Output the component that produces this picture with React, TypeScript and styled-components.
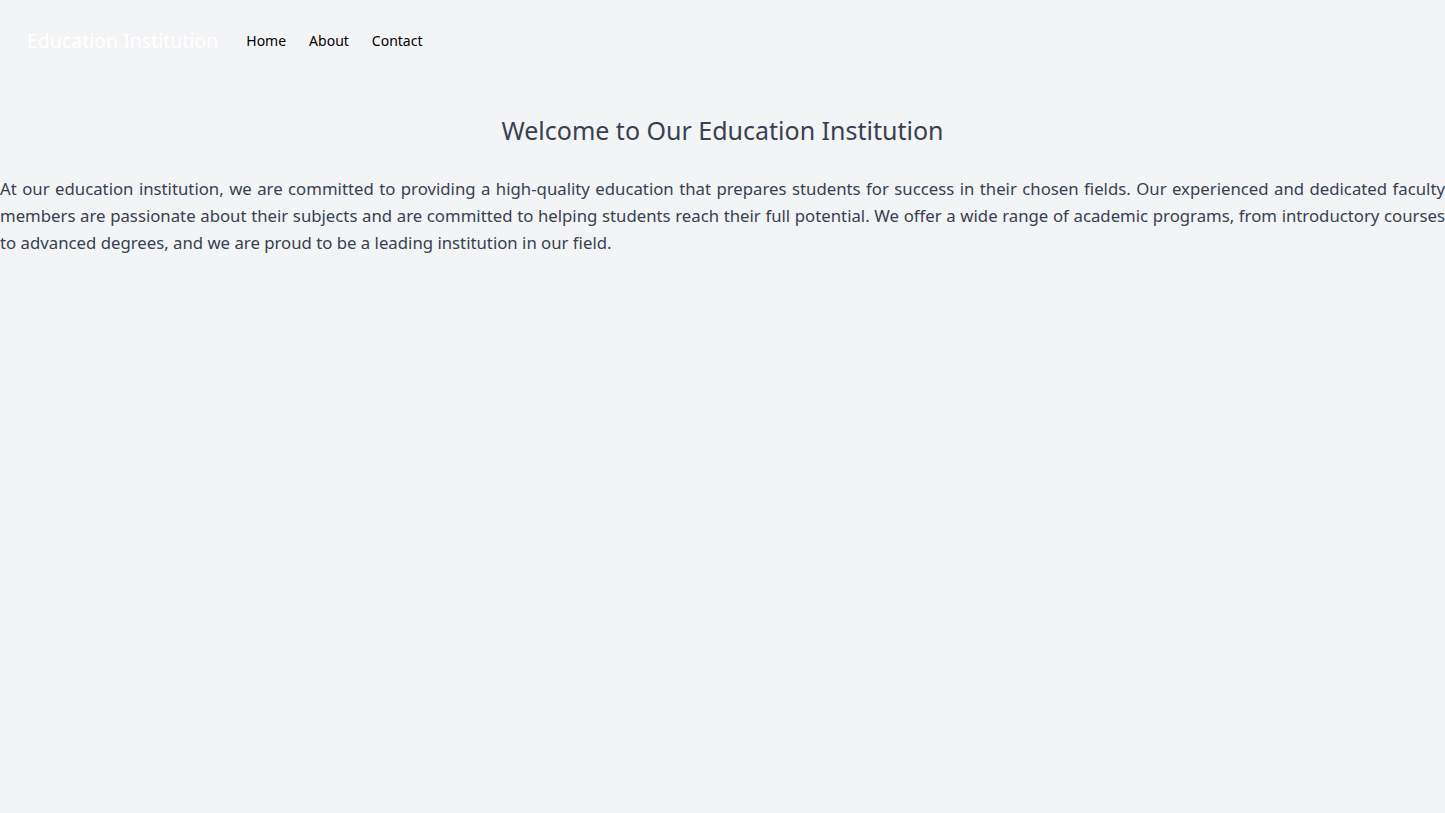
import React from "react";
import styled, { createGlobalStyle } from "styled-components";

const Global = createGlobalStyle`
  html, body { margin: 0; padding: 0; background: #f3f4f6; }
  body { font-family: "Noto Sans", sans-serif; line-height: 1.5; }
  * { box-sizing: border-box; }
`;

const Page = styled.div`
  min-height: 813px;
  background: #f3f4f6;
`;

const Nav = styled.nav`
  display: flex;
  align-items: center;
  padding: 27px 27px;
  gap: 28px;
`;

const Brand = styled.a`
  color: #ffffff;
  font-size: 19.5px;
  line-height: 28px;
  text-decoration: none;
`;

const Links = styled.div`
  display: flex;
  gap: 23px;
`;

const NavLink = styled.a`
  color: #000000;
  font-size: 14px;
  line-height: 20px;
  text-decoration: none;
`;

const Main = styled.main`
  padding-top: 32px;
`;

const Title = styled.h1`
  margin: 0 0 29px;
  text-align: center;
  font-size: 25px;
  font-weight: 400;
  line-height: 32px;
  color: #374151;
`;

const Text = styled.p`
  margin: 0;
  font-size: 16.75px;
  line-height: 27px;
  text-align: justify;
  color: #374151;
`;

export default function App() {
  return (
    <Page>
      <Global />
      <Nav>
        <Brand href="#">Education Institution</Brand>
        <Links>
          <NavLink href="#">Home</NavLink>
          <NavLink href="#">About</NavLink>
          <NavLink href="#">Contact</NavLink>
        </Links>
      </Nav>
      <Main>
        <Title>Welcome to Our Education Institution</Title>
        <Text>
          At our education institution, we are committed to providing a high-quality education that prepares students for success in their chosen fields. Our experienced and dedicated faculty members are passionate about their subjects and are committed to helping students reach their full potential. We offer a wide range of academic programs, from introductory courses to advanced degrees, and we are proud to be a leading institution in our field.
        </Text>
      </Main>
    </Page>
  );
}
